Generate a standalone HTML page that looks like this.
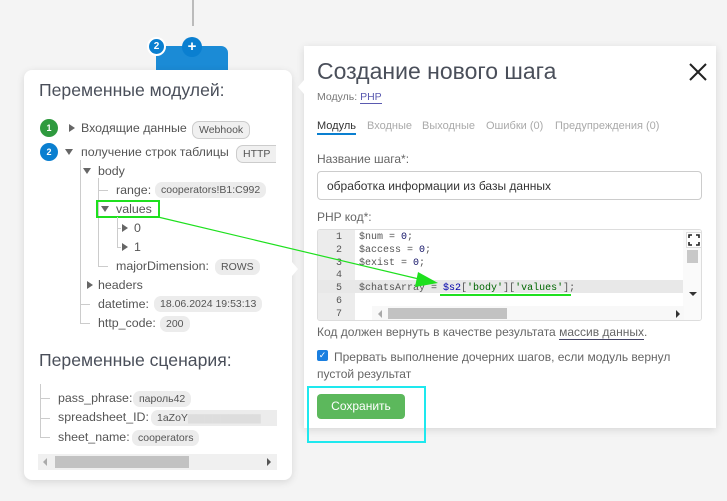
<!DOCTYPE html>
<html><head><meta charset="utf-8"><style>
*{margin:0;padding:0;box-sizing:border-box}
body{width:727px;height:501px;background:#f4f4f4;font-family:"Liberation Sans","DejaVu Sans",sans-serif;color:#555;position:relative;overflow:hidden;font-size:12.4px}
.a{position:absolute;white-space:nowrap}
.tag{position:absolute;background:#ececec;border-radius:7px;font-size:10.5px;color:#555;padding:1px 6px;line-height:14px;white-space:nowrap}
.tri{position:absolute;width:0;height:0}
.d{border-left:4px solid transparent;border-right:4px solid transparent;border-top:6px solid #666}
.r{border-top:4px solid transparent;border-bottom:4px solid transparent;border-left:6px solid #666}
.vl{position:absolute;width:1px;background:#ccc}
.hl{position:absolute;height:1px;background:#ccc}
.code{position:absolute;font-family:"Liberation Mono",monospace;font-size:10px;color:#555;white-space:pre}
</style></head><body>
<div class="vl" style="left:192px;top:0;height:26px;background:#bbb;width:2px"></div>
<div class="a" style="left:156px;top:46px;width:72px;height:40px;background:#1b8bd6;border-radius:7px"></div>
<div class="a" style="left:147px;top:37px;width:19px;height:19px;border-radius:50%;background:#0a7fd0;border:2px solid #fff;color:#fff;font-size:10px;font-weight:bold;text-align:center;line-height:15px">2</div>
<div class="a" style="left:182px;top:37px;width:20px;height:20px;border-radius:50%;background:#0a7fd0;color:#fff;font-size:15px;text-align:center;line-height:19px;font-weight:bold">+</div>

<div class="a" style="left:24px;top:70px;width:268px;height:410px;background:#fff;border-radius:8px;box-shadow:0 2px 8px rgba(0,0,0,.12)"></div>
<div class="a" style="left:39px;top:80px;font-size:17.6px;color:#4a4f5a">Переменные модулей:</div>
<div class="a" style="left:40px;top:119px;width:18px;height:18px;border-radius:50%;background:#2e9a3e;color:#fff;font-size:9px;font-weight:bold;text-align:center;line-height:18px">1</div>
<div class="tri r" style="left:69px;top:124px"></div>
<div class="a" style="left:81px;top:121px">Входящие данные</div>
<div class="tag" style="left:192px;top:121px;border:1px solid #ccc;background:#f0f0f0">Webhook</div>
<div class="a" style="left:40px;top:143px;width:18px;height:18px;border-radius:50%;background:#0a7fd0;color:#fff;font-size:9px;font-weight:bold;text-align:center;line-height:18px">2</div>
<div class="tri d" style="left:65px;top:149px"></div>
<div class="a" style="left:81px;top:145px">получение строк таблицы</div>
<div class="tag" style="left:236px;top:145px;border:1px solid #ccc;background:#f0f0f0;border-right:none;border-radius:7px 0 0 7px">HTTP</div>

<div class="vl" style="left:80px;top:160px;height:164px"></div>
<div class="tri d" style="left:83px;top:168px"></div>
<div class="a" style="left:98px;top:164px">body</div>
<div class="vl" style="left:98px;top:178px;height:88px"></div>
<div class="hl" style="left:98px;top:190px;width:10px"></div>
<div class="a" style="left:116px;top:183px">range:</div>
<div class="tag" style="left:155px;top:182px">cooperators!B1:C992</div>
<div class="tri d" style="left:101px;top:206px"></div>
<div class="a" style="left:116px;top:202px">values</div>
<div class="a" style="left:96px;top:200px;width:64px;height:18px;border:2px solid #1ee01e"></div>
<div class="vl" style="left:117px;top:217px;height:30px"></div>
<div class="hl" style="left:117px;top:228px;width:4px"></div>
<div class="tri r" style="left:122px;top:224px"></div>
<div class="a" style="left:134px;top:221px">0</div>
<div class="hl" style="left:117px;top:247px;width:4px"></div>
<div class="tri r" style="left:122px;top:243px"></div>
<div class="a" style="left:134px;top:240px">1</div>
<div class="hl" style="left:98px;top:266px;width:10px"></div>
<div class="a" style="left:116px;top:259px">majorDimension:</div>
<div class="tag" style="left:215px;top:259px">ROWS</div>
<div class="tri r" style="left:87px;top:281px"></div>
<div class="a" style="left:98px;top:278px">headers</div>
<div class="hl" style="left:80px;top:304px;width:10px"></div>
<div class="a" style="left:98px;top:297px">datetime:</div>
<div class="tag" style="left:154px;top:296px">18.06.2024 19:53:13</div>
<div class="hl" style="left:80px;top:323px;width:10px"></div>
<div class="a" style="left:98px;top:316px">http_code:</div>
<div class="tag" style="left:160px;top:316px">200</div>

<div class="a" style="left:39px;top:350px;font-size:17.6px;color:#4a4f5a">Переменные сценария:</div>
<div class="vl" style="left:40px;top:384px;height:54px"></div>
<div class="hl" style="left:40px;top:398px;width:10px"></div>
<div class="hl" style="left:40px;top:418px;width:10px"></div>
<div class="hl" style="left:40px;top:437px;width:10px"></div>
<div class="a" style="left:58px;top:391px">pass_phrase:</div>
<div class="tag" style="left:133px;top:391px">пароль42</div>
<div class="a" style="left:58px;top:410px">spreadsheet_ID:</div>
<div class="tag" style="left:151px;top:410px;width:126px;border-radius:7px 0 0 7px">1aZoY<span style="color:#ddd">▆▆▆▆▆▆▆▆▆</span></div>
<div class="a" style="left:58px;top:430px">sheet_name:</div>
<div class="tag" style="left:132px;top:430px">cooperators</div>
<div class="a" style="left:38px;top:454px;width:239px;height:16px;background:#f0f0f0"></div>
<div class="a" style="left:55px;top:456px;width:134px;height:12px;background:#c2c2c2"></div>
<div class="tri" style="left:43px;top:458px;border-top:4px solid transparent;border-bottom:4px solid transparent;border-right:4px solid #aaa"></div>
<div class="tri" style="left:267px;top:458px;border-top:4px solid transparent;border-bottom:4px solid transparent;border-left:4px solid #555"></div>
<div class="tri" style="left:292px;top:262px;border-top:7px solid transparent;border-bottom:7px solid transparent;border-left:6px solid #fff"></div>

<div class="a" style="left:304px;top:46px;width:412px;height:382px;background:#fff;box-shadow:0 2px 8px rgba(0,0,0,.12)"></div>
<div class="tri" style="left:298px;top:80px;border-top:7px solid transparent;border-bottom:7px solid transparent;border-right:6px solid #fff"></div>
<div class="a" style="left:317px;top:58px;font-size:23px;color:#4a4f5a">Создание нового шага</div>
<svg class="a" style="left:688px;top:62px" width="20" height="20"><path d="M2 2L18 18M18 2L2 18" stroke="#222" stroke-width="2"/></svg>
<div class="a" style="left:317px;top:91px;font-size:10.5px;color:#777">Модуль: <span style="color:#5a5ab0;border-bottom:1px solid #5a5ab0">PHP</span></div>
<div class="a" style="left:317px;top:120px;font-size:11px;color:#333;border-bottom:2px solid #0a7fd0;padding-bottom:1px">Модуль</div>
<div class="a" style="left:367px;top:120px;font-size:11px;color:#aaa">Входные</div>
<div class="a" style="left:422px;top:120px;font-size:11px;color:#aaa">Выходные</div>
<div class="a" style="left:486px;top:120px;font-size:11px;color:#aaa">Ошибки (0)</div>
<div class="a" style="left:555px;top:120px;font-size:11px;color:#aaa">Предупреждения (0)</div>
<div class="a" style="left:317px;top:152px;font-size:12px;color:#666">Название шага*:</div>
<div class="a" style="left:317px;top:171px;width:385px;height:29px;border:1px solid #ccc;border-radius:4px;padding:7px 9px;font-size:12px;color:#333">обработка информации из базы данных</div>
<div class="a" style="left:317px;top:210px;font-size:12px;color:#666">PHP код*:</div>

<div class="a" style="left:317px;top:229px;width:385px;height:92px;border:1px solid #ddd;border-radius:3px;overflow:hidden">
 <div class="a" style="left:0;top:0;width:37px;height:92px;background:#ececec"></div>
 <div class="a" style="left:0;top:50px;width:365px;height:13px;background:#e8e8e8"></div>
 <div class="code" style="left:0;top:2px;width:24px;text-align:right;color:#555;line-height:12.8px">1
2
3
4
5
6
7</div>
 <div class="code" style="left:41px;top:2px;line-height:12.8px"><span>$num = <span style="color:#116">0</span>;</span>
$access = <span style="color:#116">0</span>;
$exist = <span style="color:#116">0</span>;

$chatsArray = <span style="color:#00a">$s2</span>[<span style="color:#060">'body'</span>][<span style="color:#060">'values'</span>];</div>
 <div class="a" style="left:365px;top:0;width:19px;height:92px;background:#fafafa"></div>
 <div class="a" style="left:369px;top:20px;width:11px;height:13px;background:#c8c8c8"></div>
 <div class="a" style="left:368px;top:2px;width:16px;height:16px;background:#fff;border:1px solid #ddd"></div>
 <svg class="a" style="left:370px;top:4px" width="12" height="12"><path d="M1 4V1H4M8 1H11V4M11 8V11H8M4 11H1V8" stroke="#222" stroke-width="1.6" fill="none"/></svg>
 <div class="tri" style="left:371px;top:62px;border-left:4px solid transparent;border-right:4px solid transparent;border-top:4px solid #333"></div>
 <div class="a" style="left:54px;top:76px;width:312px;height:15px;background:#f8f8f8"></div>
 <div class="a" style="left:70px;top:78px;width:119px;height:11px;background:#c2c2c2"></div>
 <div class="tri" style="left:60px;top:80px;border-top:4px solid transparent;border-bottom:4px solid transparent;border-right:4px solid #aaa"></div>
 <div class="tri" style="left:358px;top:80px;border-top:4px solid transparent;border-bottom:4px solid transparent;border-left:4px solid #333"></div>
</div>
<div class="a" style="left:440px;top:294px;width:131px;height:2px;background:#1ee01e"></div>

<div class="a" style="left:317px;top:325px;font-size:12px;color:#666">Код должен вернуть в качестве результата <span style="border-bottom:1px solid #446">массив данных</span>.</div>
<div class="a" style="left:317px;top:350px;width:11px;height:11px;background:#1a7fe0;border-radius:2px;color:#fff;font-size:9px;line-height:11px;text-align:center">✓</div>
<div class="a" style="left:317px;top:349px;font-size:12px;color:#666;white-space:normal;width:378px;line-height:17px;text-indent:17px">Прервать выполнение дочерних шагов, если модуль вернул пустой результат</div>
<div class="a" style="left:317px;top:394px;width:88px;height:25px;background:#5cb85c;border-radius:4px;color:#fff;font-size:12px;text-align:center;line-height:25px">Сохранить</div>
<div class="a" style="left:307px;top:386px;width:119px;height:57px;border:2px solid #1ee8ee"></div>

<svg class="a" style="left:0;top:0" width="727" height="501"><line x1="158" y1="217" x2="423" y2="280" stroke="#1ee01e" stroke-width="1.2"/><polygon points="438,283 418,272 415,287" fill="#1ee01e"/></svg>
</body></html>
